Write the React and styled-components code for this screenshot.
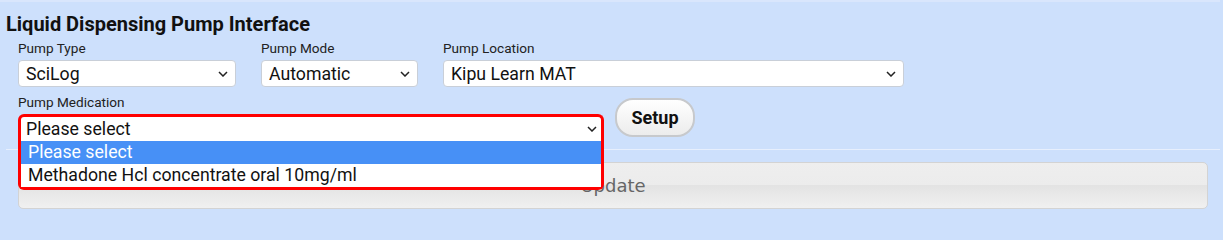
import React from 'react';
import styled, { createGlobalStyle } from 'styled-components';

const GlobalStyle = createGlobalStyle`
  html, body {
    margin: 0;
    padding: 0;
    background: #cde0fc;
    font-family: Roboto, "Liberation Sans", Arial, sans-serif;
    color: #111;
  }
`;

// panneau principal, liseré clair en haut
const Panel = styled.section`
  width: 1214px;
  border-top: 2px solid #d9e6fc;
  padding: 10px 0 30px 6px;
`;

const Title = styled.h3`
  margin: 0;
  font-size: 20px;
  line-height: 24px;
  font-weight: 700;
  color: #111;
`;

const FieldRow = styled.div`
  display: flex;
  align-items: flex-start;
  gap: ${p => p.$gap || 25}px;
  margin: ${p => p.$top || 4}px 0 0 12px;
`;

const Field = styled.div`
  display: flex;
  flex-direction: column;
  gap: 4px;
  width: ${p => p.$width}px;
`;

const Label = styled.label`
  font-size: 13.6px;
  line-height: 16px;
  color: #222;
`;

const SelectBox = styled.div`
  box-sizing: border-box;
  height: 27px;
  display: flex;
  align-items: center;
  justify-content: space-between;
  padding: 0 7px 0 7px;
  background: #fff;
  border: 1px solid #c9cfd8;
  border-radius: 4px;
  font-size: 17.7px;
  color: #111;
`;

const Chevron = () => (
  <svg width="10" height="6" viewBox="0 0 10 6">
    <path d="M1 1 L5 5 L9 1" fill="none" stroke="#222" strokeWidth="1.5" />
  </svg>
);

// champ médication, ouvert avec contour rouge
const MedWrap = styled.div`
  position: relative;
  width: 586px;
`;

const MedSelect = styled(SelectBox)`
  height: 26px;
  border: 3px solid #f00;
  border-bottom: none;
  border-radius: 6px 6px 0 0;
  padding: 0 4px 0 5px;
`;

const DropList = styled.ul`
  position: absolute;
  top: 100%;
  left: 0;
  right: 0;
  margin: 0;
  padding: 1px 0 0;
  list-style: none;
  background: #fff;
  border: 3px solid #f00;
  border-top: none;
  border-radius: 0 0 6px 6px;
  z-index: 2;
`;

const Option = styled.li`
  height: 23px;
  line-height: 23px;
  padding-left: 7px;
  font-size: 17.7px;
  background: ${p => (p.$active ? '#4790f6' : '#fff')};
  color: ${p => (p.$active ? '#fff' : '#111')};
`;

const SetupButton = styled.button`
  margin-top: 4px;
  width: 80px;
  height: 39px;
  border: 2px solid #c7c9cc;
  border-radius: 18px;
  background: linear-gradient(#ffffff, #ececec);
  font-family: Roboto, "Liberation Sans", Arial, sans-serif;
  font-size: 18px;
  font-weight: 700;
  color: #111;
  padding: 0;
`;

const Divider = styled.hr`
  margin: 9px 0 0;
  border: none;
  height: 1px;
  background: #e7effd;
`;

const UpdateButton = styled.button`
  display: block;
  box-sizing: border-box;
  width: 1190px;
  height: 47px;
  margin: 12px 0 0 12px;
  border: 1px solid #d3d3d3;
  border-radius: 5px;
  background: linear-gradient(#eeeeee 0%, #ececec 48%, #e3e3e3 50%, #f0f0f0 100%);
  font-family: "DejaVu Sans", Verdana, sans-serif;
  font-size: 18px;
  color: #666;
`;

export default function App() {
  return (
    <>
      <GlobalStyle />
      <Panel>
        <Title>Liquid Dispensing Pump Interface</Title>
        <FieldRow>
          <Field $width={218}>
            <Label>Pump Type</Label>
            <SelectBox>SciLog<Chevron /></SelectBox>
          </Field>
          <Field $width={157}>
            <Label>Pump Mode</Label>
            <SelectBox>Automatic<Chevron /></SelectBox>
          </Field>
          <Field $width={461}>
            <Label>Pump Location</Label>
            <SelectBox>Kipu Learn MAT<Chevron /></SelectBox>
          </Field>
        </FieldRow>
        <FieldRow $top={7} $gap={11}>
          <Field $width={586}>
            <Label>Pump Medication</Label>
            <MedWrap>
              <MedSelect>Please select<Chevron /></MedSelect>
              <DropList>
                <Option $active>Please select</Option>
                <Option>Methadone Hcl concentrate oral 10mg/ml</Option>
              </DropList>
            </MedWrap>
          </Field>
          <SetupButton>Setup</SetupButton>
        </FieldRow>
        <Divider />
        <UpdateButton>Update</UpdateButton>
      </Panel>
    </>
  );
}
